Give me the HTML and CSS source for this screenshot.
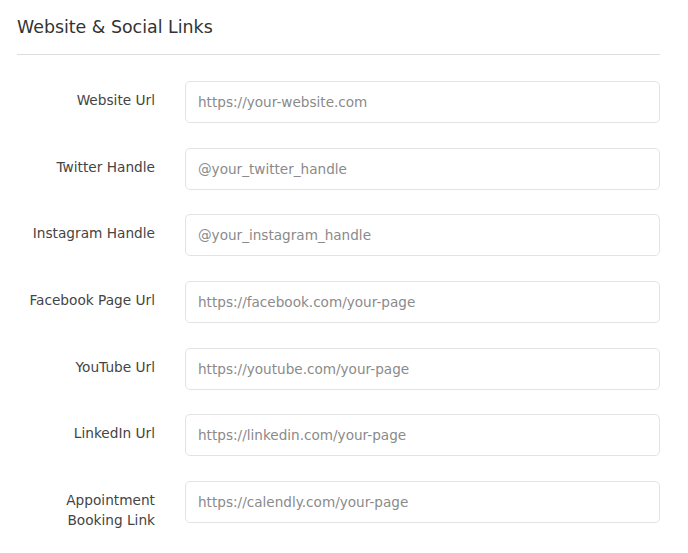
FILE: index.html
```html
<!DOCTYPE html>
<html lang="en">
<head>
    <meta charset="UTF-8">
    <meta name="viewport" content="width=device-width, initial-scale=1.0">
    <title>Website &amp; Social Links</title>
    <link rel="stylesheet" href="styles.css">
</head>
<body>
    <div class="section">
        <h2 class="section-title">Website &amp; Social Links</h2>
        <form class="links-form">
            <label for="website">Website Url</label>
            <input type="text" id="website" placeholder="https://your-website.com">

            <label for="twitter">Twitter Handle</label>
            <input type="text" id="twitter" placeholder="@your_twitter_handle">

            <label for="instagram">Instagram Handle</label>
            <input type="text" id="instagram" placeholder="@your_instagram_handle">

            <label for="facebook">Facebook Page Url</label>
            <input type="text" id="facebook" placeholder="https://facebook.com/your-page">

            <label for="youtube">YouTube Url</label>
            <input type="text" id="youtube" placeholder="https://youtube.com/your-page">

            <label for="linkedin">LinkedIn Url</label>
            <input type="text" id="linkedin" placeholder="https://linkedin.com/your-page">

            <label for="booking">Appointment<br>Booking Link</label>
            <input type="text" id="booking" placeholder="https://calendly.com/your-page">
        </form>
    </div>
</body>
</html>
```

FILE: styles.css
```css
body {
    margin: 0;
    background: #fff;
    font-family: 'DejaVu Sans', sans-serif;
    color: #444;
}

.section {
    padding: 15px 28px 0 17px;
}

.section-title {
    margin: 0;
    padding-bottom: 15px;
    border-bottom: 1px solid #dedede;
    font-size: 17.4px;
    font-weight: normal;
    line-height: 24px;
    color: #333;
}

.links-form {
    display: grid;
    grid-template-columns: 138px 1fr;
    column-gap: 30px;
    row-gap: 24.67px;
    margin-top: 26px;
}

label {
    padding-top: 9px;
    font-size: 13.7px;
    line-height: 20px;
    text-align: right;
    color: #444;
}

input {
    box-sizing: border-box;
    width: 100%;
    height: 42px;
    padding: 0 12px;
    border: 1px solid #e3e3e3;
    border-radius: 5px;
    font-family: inherit;
    font-size: 13.6px;
    color: #333;
}

input::placeholder {
    color: #8a8a8a;
}
```
